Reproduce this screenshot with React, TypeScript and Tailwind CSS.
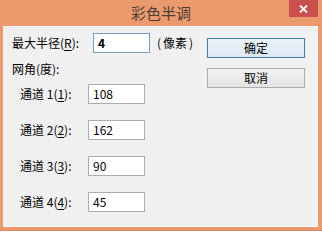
import React from "react";

const cjk = { fontFamily: '"Noto Sans CJK SC", "Liberation Sans", sans-serif' };

function Field({ value, focused }: { value: string; focused?: boolean }) {
  return (
    <div
      className={`w-[57px] h-[20px] bg-white border flex items-center pl-[4px] text-[12px] text-black ${
        focused ? "border-[#7a9cc0] font-bold" : "border-[#abadb3]"
      }`}
      style={cjk}
    >
      {value}
    </div>
  );
}

function Channel({ n, value }: { n: number; value: string }) {
  return (
    <div className="flex items-center h-[20px] pl-[8px]">
      <div className="w-[68px] text-[12px] text-black whitespace-nowrap leading-none">
        通道 {n}(<span className="underline underline-offset-2">{n}</span>):
      </div>
      <Field value={value} />
    </div>
  );
}

export default function App() {
  return (
    <div
      className="w-[322px] h-[231px] bg-[#eb9a6d] flex flex-col border-b border-[#d98a5e]"
      style={cjk}
    >
      {/* Title bar */}
      <div className="h-[26px] relative flex items-center justify-center shrink-0">
        <span className="text-[15px] text-[#4a3d38] leading-none mt-[-1px]">彩色半调</span>
        <div className="absolute right-[4px] top-0 w-[29px] h-[17px] bg-[#c9504c] flex items-center justify-center">
          <svg width="9" height="8" viewBox="0 0 9 8">
            <path d="M1 0.5 L8 7.5 M8 0.5 L1 7.5" stroke="#fff" strokeWidth="1.8" />
          </svg>
        </div>
      </div>

      {/* Client area */}
      <div className="flex-1 ml-[3px] mr-[4px] mb-[3px] bg-[#f0f0f0] border-r border-b border-[#fafafa] flex">
        <div className="flex-1 pl-[9px] pt-[7px] flex flex-col">
          <div className="flex items-center h-[20px]">
            <div className="w-[81px] text-[12px] text-black leading-none whitespace-nowrap">
              最大半径(<span className="underline underline-offset-2">R</span>):
            </div>
            <Field value="4" focused />
            <span className="ml-[7px] text-[12px] text-black leading-none whitespace-nowrap">
              (<span className="px-[2px]">像素</span>)
            </span>
          </div>
          <div className="mt-[6px] h-[20px] flex items-center text-[12px] text-black leading-none">
            网角(度):
          </div>
          <div className="mt-[5px] flex flex-col gap-[16px]">
            <Channel n={1} value="108" />
            <Channel n={2} value="162" />
            <Channel n={3} value="90" />
            <Channel n={4} value="45" />
          </div>
        </div>

        <div className="w-[98px] mr-[12px] pt-[12px] flex flex-col gap-[10px]">
          <button className="h-[20px] w-full border border-[#3c7fb1] bg-gradient-to-b from-[#eaf3fb] to-[#dde9f5] text-[12px] text-black leading-none">
            确定
          </button>
          <button className="h-[20px] w-full border border-[#acacac] bg-gradient-to-b from-[#f2f2f2] to-[#e3e3e3] text-[12px] text-black leading-none">
            取消
          </button>
        </div>
      </div>
    </div>
  );
}
